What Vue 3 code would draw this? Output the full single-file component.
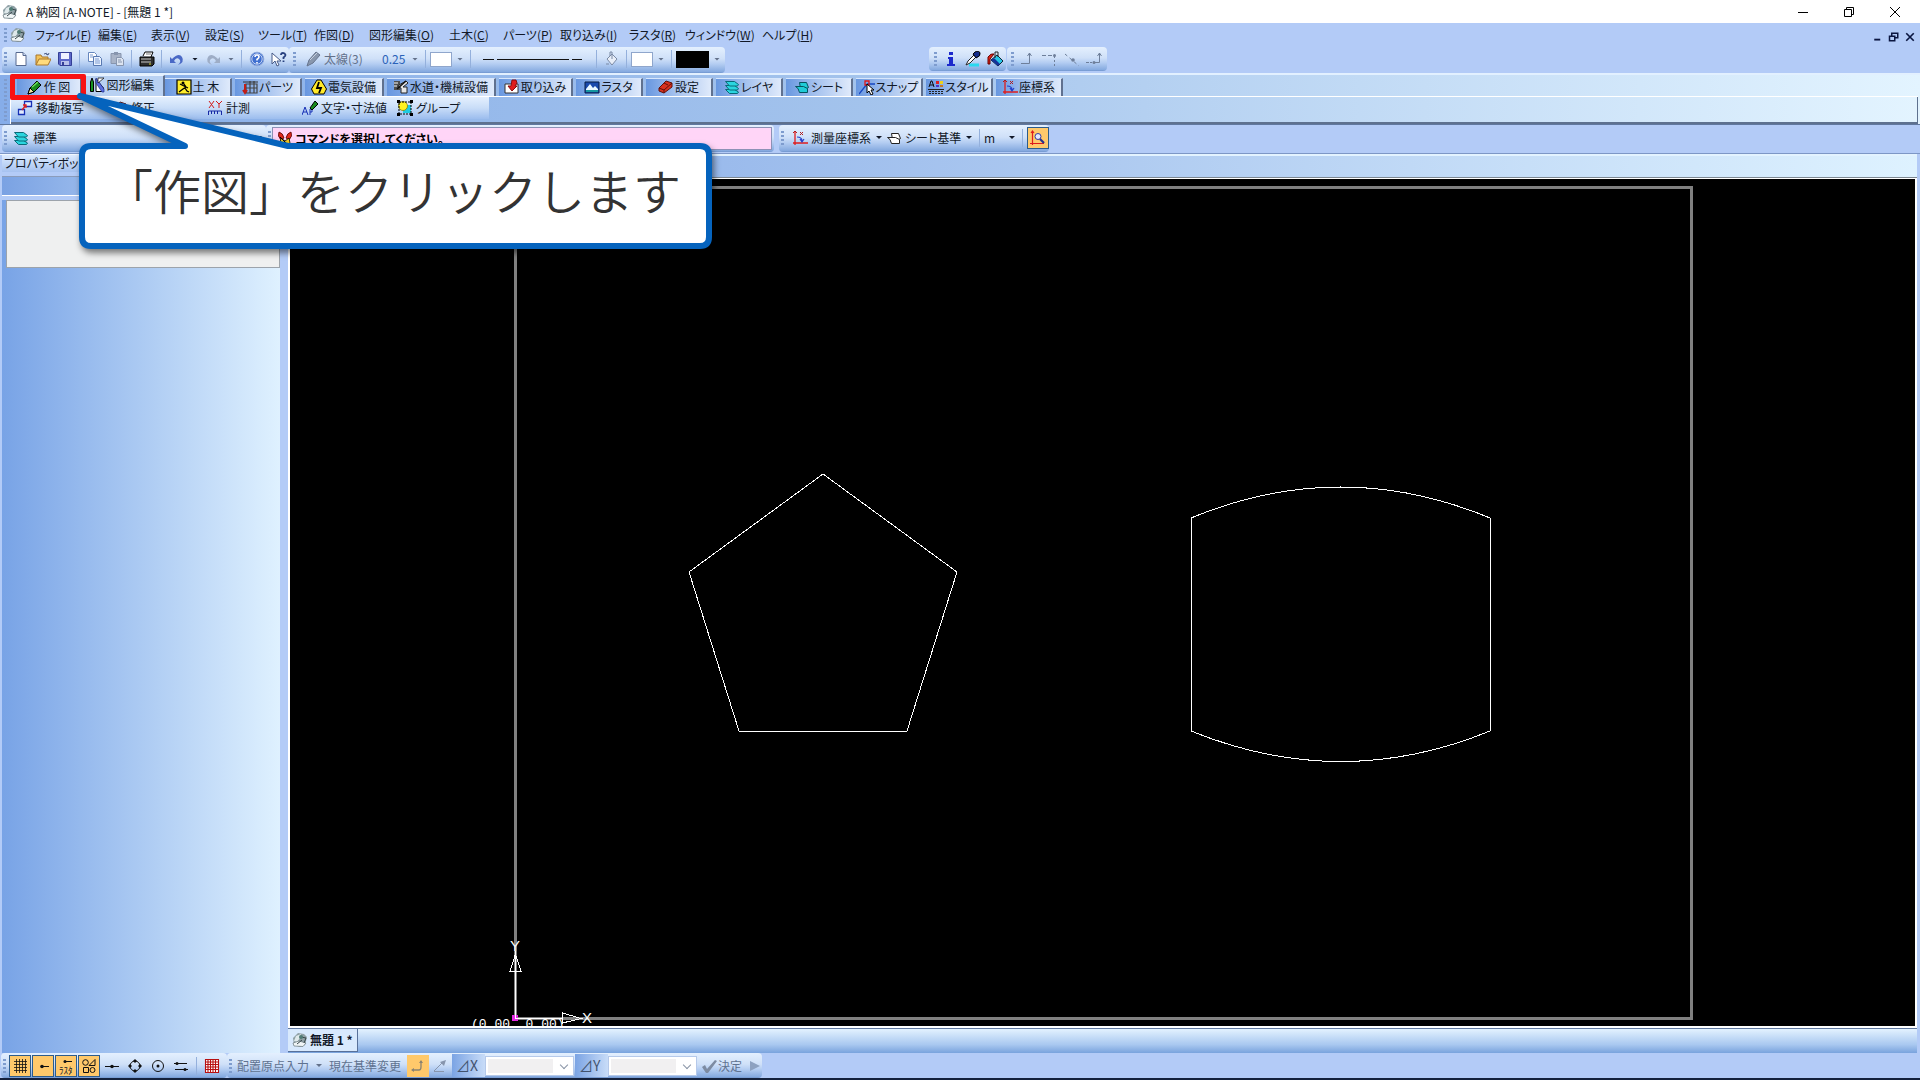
<script setup>
import { ref } from 'vue'

const icons = {
  app: '<path d="M1 6 6 1l6 1 3 3-2 8-5 2-6-2z" fill="#8fa0a5"/><path d="M2 9 4 4l5-2-1 4-3 4z" fill="#dfe9eb"/><path d="M1 11l6-2 7 2-3 3.500-9-.5z" fill="#f0f5f6" stroke="#66767b" stroke-width=".7"/><path d="M5 12l5-4M9 5l5 1-2 5" stroke="#39484c" fill="none"/><circle cx="9" cy="5" r="2" fill="#4f7a74"/>',
  file: '<path d="M3 1.500h7l3 3v10H3z" fill="#fff" stroke="#56698f"/><path d="M10 1.500v3h3" fill="#cfdcf5" stroke="#56698f"/>',
  open: '<path d="M1 14V4h5l1 2h6v3" fill="#f2c35a" stroke="#a8762a"/><path d="M1 14 4 8h12l-3 6z" fill="#ffdb7c" stroke="#a8762a"/><path d="M9 3q3-2 4 1m0 0 1-2m-1 2-2-1" stroke="#4b5c88" fill="none"/>',
  save: '<path d="M1.500 1.500h13v13H3l-1.500-1.500z" fill="#5c68c8" stroke="#343f96"/><path d="M4 2h8v6H4z" fill="#eef2ff"/><path d="M4 10h8v4H4z" fill="#b9c2ea"/><path d="M5 11h2v3H5z" fill="#343f96"/>',
  copy: '<path d="M1.500 1.500h6l2 2v7h-8z" fill="#fff" stroke="#6687bd"/><path d="M6.500 5.500h6l2 2v7h-8z" fill="#eaf2ff" stroke="#5879b1"/><path d="M8 8h4M8 10h5M8 12h5M3 4h3M3 6h3" stroke="#7c9bd0"/>',
  paste: '<path d="M2 2.500h10v10H2z" fill="#a8b3c7" stroke="#8795ae"/><path d="M5 1h4v3H5z" fill="#8795ae"/><path d="M7.500 6.500h5l2 2v6h-7z" fill="#dce4f0" stroke="#8795ae"/><path d="M9 9h3M9 11h4" stroke="#8795ae"/>',
  print: '<path d="M4 5 6 1h8l-2 5" fill="#fff" stroke="#000"/><path d="M1 6h14v7l-2 2H1z" fill="#2e2e2e" stroke="#000"/><path d="M2 8h10M2 11h10" stroke="#c9c9c9"/><path d="M10 13h2" stroke="#d5d52c"/><path d="M7 3h5" stroke="#777"/>',
  undo: '<path d="M3 8q7-7 10-2t-4 8q4-4 1-6t-5 2l2 2H1V6z" fill="#4a69c6"/>',
  redo: '<path d="M13 8Q6 1 3 6t4 8Q3 10 6 8t5 2l-2 2h6V6z" fill="#9eadc6"/>',
  help: '<circle cx="8" cy="8" r="6.800" fill="#3f6fd0" stroke="#8ba7da"/><circle cx="8" cy="8" r="5.200" fill="none" stroke="#fff" stroke-width=".7"/><path d="M6 6q0-2 2-2t2 2q0 1-2 2.500v1M8 11v1.500" stroke="#fff" stroke-width="1.600" fill="none"/>',
  what: '<path d="M1 2v11l3-3 2 5 2-1-2-4h4z" fill="#fff" stroke="#465a88"/><path d="M10 4q0-2 2-2t2.500 2q0 1-2 2.500V8m0 1.500V11" stroke="#27407f" stroke-width="1.800" fill="none"/>',
  grayPen: '<path d="M1 15 3 9 10 1l4 3-7 8z" fill="#8997ad" stroke="#67758e"/><path d="m4 9 7-7" stroke="#c9d2e0"/>',
  pen: '<path d="M1 15 3 9 10 2l4 4-7 7z" fill="#178a1b" stroke="#000"/><path d="M1 15 3 9l4 4z" fill="#f4e8a0" stroke="#000"/><path d="m5 8 6-5" stroke="#6ee05d" stroke-width="1.500"/>',
  bucket: '<path d="m3 8 5-5 5 5-5 6z" fill="#e8eef8" stroke="#7a8aa5"/><path d="M8 8V1h-2v4M2 13h3" stroke="#7a8aa5" fill="none"/>',
  tools: '<path d="M1.500 5 3 1l1.500 4v9.500h-3z" fill="#179420" stroke="#000"/><path d="M7 2v12.500h7.500V11z" fill="#fff" stroke="#000"/><path d="m7 1 8 11v3h-2L7 6z" fill="#5d6fe0" stroke="#1c2c8c" stroke-width=".7"/><path d="M15 1 9 6V1z" fill="#fff" stroke="#000" stroke-width=".7"/>',
  civil: '<path d="M1 1h14v14H1z" fill="#ffed2c" stroke="#000" stroke-width="1.200"/><circle cx="7" cy="4" r="1.500"/><path d="m8 5 2 3-3 2-4 3M9 9l2 3 2 1M4 5l8 4" stroke="#000" stroke-width="1.300" fill="none"/>',
  parts: '<path d="M4 5h11v9H4zM8 2v12M12 2v12M4 9h11" fill="none" stroke="#444" stroke-width="1.200"/><path d="M1 3h15" stroke="#333"/><path d="M3 5v9m-2-3 2 3 2-3" stroke="#c21d16" stroke-width="2" fill="none"/>',
  elec: '<path d="M6 1h4l5.500 9-2.500 5H3L.5 10z" fill="#ffe92a" stroke="#000"/><path d="M8 3 6 9h4l-2 5" stroke="#000" stroke-width="1.800" fill="none"/>',
  water: '<path d="M1 2h6v9H1z" fill="#4d4d4d"/><path d="m6 6 7-4 2 2-5 4h4v6H8V9L5 8z" fill="#e6e6e6" stroke="#222"/><path d="m4 10 9-8" stroke="#111" stroke-width="1.500"/><path d="M1 4h4M1 7h3" stroke="#fff"/>',
  take: '<path d="M1 5h13v9H1z" fill="#fff" stroke="#333"/><path d="M8 1h4l1 3-2 3h2l-5 5-4-5h3z" fill="#e01d1d" stroke="#8a0d0d"/>',
  raster: '<path d="M1 3h14v11H1z" fill="#1a4aac" stroke="#071d45"/><path d="m2 10 4-5 3 4 2-2 3 3v1H2z" fill="#e9f8ff"/><path d="M2 11h12v2H2z" fill="#1697a2"/>',
  config: '<path d="M1 9 8 2l6 2v4l-8 6-5-2z" fill="#d7301f" stroke="#601008"/><path d="m1 9 5 2 8-7M6 11v3M6 4l4 2" stroke="#601008" fill="none"/>',
  layer: '<path d="M1.500 10.500h9l4 2.500-1 1.500h-8z" fill="#2bd5df" stroke="#086a78"/><path d="M1.500 6.500h9l4 3-1 1.500h-8z" fill="#2bd5df" stroke="#086a78"/><path d="M1.500 2.500h9l4 3-1 1.500h-8z" fill="#2bd5df" stroke="#086a78"/>',
  sheet: '<path d="M5.500 3.500h7l2 5-2 1h-6z" fill="#20ccd7" stroke="#06535f"/><path d="M1.500 7.500h8l4 2v4h-8q-1-5-4-6z" fill="#20ccd7" stroke="#06535f"/>',
  sheetWhite: '<path d="M5.500 3.500h7l2 5-2 1h-6z" fill="#fff" stroke="#222"/><path d="M1.500 7.500h8l4 2v4h-8q-1-5-4-6z" fill="#fff" stroke="#222"/>',
  snap: '<path d="m0 15 8-10M8 5h8" stroke="#1747c2" stroke-width="1.300"/><path d="M6 2h4v4H6z" fill="none" stroke="#e01818" stroke-width="1.300"/><path d="M8 5v9l2-2 2 4 2-1-2-4h3z" fill="#fff" stroke="#000"/>',
  style: '<path d="m1 8 2-6h1l2 6M2 6h4" stroke="#111" fill="none"/><path d="M8 2h3v3H8z" fill="#e02121"/><path d="M12 2h3v3h-3z" fill="#edd31b"/><path d="M8 6h3v2H8z" fill="#4936c9"/><path d="M12 6h3v2h-3z" fill="#c97820"/><path d="M0 10.500h16" stroke="#222"/><path d="M1 12.500h14M1 14.500h14" stroke="#222" stroke-dasharray="2 1"/>',
  coord: '<path d="M3 1v14M1 13h15" stroke="#e01c1c" stroke-width="1.300"/><path d="m1 3 2-2 2 2M8 2l3 3m0-3L8 5" stroke="#b01c1c" fill="none"/><path d="M5 7q5 0 5 4m-2-2 2 3 2-3" stroke="#2440ca" stroke-width="1.200" fill="none"/>',
  coordZoom: '<path d="M2.500 1v14M0 13.500h14M1 3l1.500-2L4 3" stroke="#e01c1c" stroke-width="1.200" fill="none"/><circle cx="8" cy="6.500" r="3" fill="#e5e8ff" stroke="#333c9e"/><path d="m10 9 4 4" stroke="#26338f" stroke-width="2.200"/>',
  move: '<path d="M7.500 1.500h7v5h-7zM1.500 9.500h6v5h-6z" fill="#e4edff" stroke="#1730b5" stroke-width="1.300"/><path d="m5 10 4-5m-3 0h3v3" stroke="#e01d1d" stroke-width="1.300" fill="none"/>',
  measure: '<path d="m2 1 5 7m0-7L2 8M9 1l3 3 3-3m-3 3v4" stroke="#d11c1c" fill="none"/><path d="M1.500 15v-4h13v4M4.500 11v3M7.500 11v3M10.500 11v3" stroke="#1629a5" fill="none"/>',
  textPen: '<path d="m0 15 3-8 3 8M1 12h4M8 15V9h2v3H8" stroke="#1730b5" fill="none"/><path d="M8 8 13 1l3 3-6 6z" fill="#188a1c" stroke="#000"/>',
  group: '<path d="M6 5h8v8H6z" fill="#20cbe2"/><circle cx="6" cy="6" r="4.500" fill="#fff21f" stroke="#7a7300" stroke-width=".7"/><path d="M0 0h3v3H0zM13 0h3v3h-3zM0 13h3v3H0zM13 13h3v3h-3z" fill="#000"/><path d="M2 3v10m1 1h10m1-1V3m-1-1H3" stroke="#000" stroke-dasharray="2 1" fill="none"/>',
  command: '<path d="M2 1q4 1 5 6L4 9Q0 5 2 1zM14 1q-4 1-5 6l3 2q4-4 2-8z" fill="#e22a1c" stroke="#500" stroke-width=".8"/><path d="m4 7 4 3 4-3 1 5-3 3H6l-3-3z" fill="#f3ca22" stroke="#000" stroke-width=".8"/><path d="m3 6 8 8" stroke="#000"/>',
  info: '<path d="M6 1h4v3H6zM5 6h5v7h2v2H4v-2h2V8H5z" fill="#1c29cc"/>',
  dropper: '<path d="M4 14h10" stroke="#29d9f0" stroke-width="3"/><path d="m1 14 2-4 6-6 2 2-6 6z" fill="#fff" stroke="#222"/><path d="m8 3 2-2q4-2 5 1t-4 5z" fill="#142c8a" stroke="#000"/>',
  fill: '<path d="M1 13V6q3-4 6-3L3 8v5z" fill="#e22617" stroke="#600"/><path d="m4 9 6-5 6 6-5 5z" fill="#25c6e7" stroke="#123"/><path d="m4 9 3-2 6 6-2 2z" fill="#153399"/><path d="M8 7V1h3v5" stroke="#222" fill="none"/>',
  snapA: '<path d="M1 12.500h8.500V2m-2 3 2-3 2 3" stroke="#6e7f9a" fill="none"/>',
  snapB: '<path d="M0 4.500h11" stroke="#6e7f9a" stroke-dasharray="4 2"/><path d="M12.500 5v10" stroke="#6e7f9a" stroke-dasharray="2 2"/><circle cx="12.500" cy="4.500" r="1.500" fill="#6e7f9a"/>',
  snapC: '<path d="m1 3 14 12" stroke="#6e7f9a" stroke-dasharray="3 3"/><circle cx="9" cy="9" r="1.800" fill="#6e7f9a"/>',
  snapD: '<path d="M0 11.500h6" stroke="#6e7f9a" stroke-dasharray="3 1"/><circle cx="8" cy="11.500" r="1.500" fill="#6e7f9a"/><path d="M9 11.500h4.500V2m-2 3 2-3 2 3" stroke="#6e7f9a" fill="none"/>',
  grid: '<path d="M2 3.500h13M2 6.500h13M2 9.500h13M2 12.500h13M4.500 1v14M7.500 1v14M10.500 1v14M13.500 1v14" stroke="#111" stroke-width=".8"/>',
  gridRed: '<path d="M1 1h14v14H1z" fill="#fff"/><path d="M1 1.500h14M1 4h14M1 6.500h14M1 9h14M1 11.500h14M1 14.500h14M1.500 1v14M4 1v14M6.500 1v14M9 1v14M11.500 1v14M14.500 1v14" stroke="#b81010" stroke-width="1.100"/>',
  dotLine: '<path d="M6 8.500h8" stroke="#111"/><circle cx="7" cy="8.500" r="1.800" fill="#111"/>',
  dotSmall: '<path d="M6 3.500h8" stroke="#111"/><circle cx="7" cy="3.500" r="1.500" fill="#111"/>',
  shapes: '<circle cx="4.500" cy="4.500" r="2.800" fill="none" stroke="#111"/><path d="M2.500 9.500h5v5h-5zM8 7.500l6-6v6z" fill="none" stroke="#111"/><circle cx="11.500" cy="12" r="2.500" fill="none" stroke="#111"/>',
  midLine: '<path d="M1 8.500h14" stroke="#111"/><circle cx="8" cy="8.500" r="1.800" fill="#111"/>',
  circle4: '<circle cx="8" cy="8" r="5" fill="none" stroke="#111"/><path d="M8 1l2 2-2 2-2-2zM8 11l2 2-2 2-2-2zM1 8l2-2 2 2-2 2zM11 8l2-2 2 2-2 2z" fill="#111"/>',
  target: '<circle cx="8" cy="8" r="5.500" fill="none" stroke="#111"/><circle cx="8" cy="8" r="1.500" fill="#111"/>',
  parallel: '<path d="M1 5.500h13M2 11.500h13" stroke="#111"/><circle cx="4" cy="5.500" r="1.500" fill="#111"/><circle cx="12" cy="11.500" r="1.500" fill="#111"/>',
  relA: '<path d="M2 12h7q2 0 2-3V3" stroke="#8b8370" stroke-width="1.300" fill="none"/><path d="M9 5l2-3 2 3zM4 10v4l-3-2z" fill="#8b8370"/>',
  relB: '<path d="m2 13 9-9M2 13.500h10" stroke="#8795ad" fill="none"/><path d="m8 4 6-2-2 6z" fill="#8795ad"/>',
  check: '<path d="m1 9 3-2 2 4 8-9 2 1-9 12H5z" fill="#7d8ba2"/>',
  play: '<path d="m3 3 10 5-10 5z" fill="#8da1c0"/>',
  min: '<path d="M3 8.500h10" stroke="currentColor"/>',
  restore: '<path d="M3.500 5.500h7v7h-7zM5.500 5.500v-2h7v7h-2" fill="none" stroke="currentColor"/>',
  close: '<path d="m3 3 10 10M13 3 3 13" stroke="currentColor"/>',
  docMin: '<path d="M3 11.500h8" stroke="currentColor" stroke-width="2.500"/>',
  docRestore: '<path d="M2 7h7v6H2zM5 6V3h8v6H9" fill="none" stroke="currentColor" stroke-width="2"/>',
  docClose: '<path d="m3 3 10 10M13 3 3 13" stroke="currentColor" stroke-width="2.200"/>'
}

const menus = [
  ['ファイル', 'F', 63], ['編集', 'E', 53], ['表示', 'V', 54], ['設定', 'S', 53],
  ['ツール', 'T', 56], ['作図', 'D', 55], ['図形編集', 'O', 80], ['土木', 'C', 54],
  ['パーツ', 'P', 57], ['取り込み', 'I', 69], ['ラスタ', 'R', 56], ['ウィンドウ', 'W', 77], ['ヘルプ', 'H', 60]
]

const tabs = [
  ['作 図', 'pen', 68], ['図形編集', 'tools', 80], ['土 木', 'civil', 70], ['パーツ', 'parts', 70],
  ['電気設備', 'elec', 82], ['水道・機械設備', 'water', 112], ['取り込み', 'take', 77], ['ラスタ', 'raster', 70],
  ['設定', 'config', 70], ['レイヤ', 'layer', 70], ['シート', 'sheet', 70], ['スナップ', 'snap', 70],
  ['スタイル', 'style', 70], ['座標系', 'coord', 70]
]
const activeTab = ref('図形編集')

const commands = [
  ['移動複写', 'move'], ['修正', 'config'], ['計測', 'measure'], ['文字・寸法値', 'textPen'], ['グループ', 'group']
]

const snapToggles = [['グリッド', 'grid'], ['端点', 'dotLine'], ['ラスタ', 'dotSmall'], ['図形', 'shapes']]
const snapModes = [['中点', 'midLine'], ['四半円点', 'circle4'], ['中心', 'target'], ['平行', 'parallel']]
</script>

<template>
  <div class="app">
    <header class="title">
      <svg class="ico" viewBox="0 0 16 16" v-html="icons.app" />
      <h1>A 納図 [A-NOTE] - [無題 1 *]</h1>
      <div class="winbtns">
        <button v-for="n in ['min', 'restore', 'close']" :key="n" :aria-label="n">
          <svg class="ico" viewBox="0 0 16 16" v-html="icons[n]" />
        </button>
      </div>
    </header>

    <nav class="menu">
      <i class="grip" />
      <svg class="ico" viewBox="0 0 16 16" v-html="icons.app" />
      <div class="menuitems">
        <button v-for="m in menus" :key="m[1]" :style="{ width: m[2] + 'px' }">{{ m[0] }}(<u>{{ m[1] }}</u>)</button>
      </div>
      <div class="docbtns">
        <button v-for="n in ['docMin', 'docRestore', 'docClose']" :key="n" :aria-label="n">
          <svg viewBox="0 0 16 16" v-html="icons[n]" />
        </button>
      </div>
    </nav>

    <div class="row">
      <div class="bar main">
        <i class="grip" />
        <button v-for="n in ['file', 'open', 'save']" :key="n" class="cell" :aria-label="n"><svg class="ico" viewBox="0 0 16 16" v-html="icons[n]" /></button>
        <i class="sep" />
        <button v-for="n in ['copy', 'paste']" :key="n" class="cell" :aria-label="n"><svg class="ico" viewBox="0 0 16 16" v-html="icons[n]" /></button>
        <i class="sep" />
        <button class="cell" aria-label="印刷"><svg class="ico" viewBox="0 0 16 16" v-html="icons.print" /></button>
        <i class="sep" />
        <button class="cell" aria-label="元に戻す"><svg class="ico" viewBox="0 0 16 16" v-html="icons.undo" /></button>
        <i class="dd" />
        <button class="cell" aria-label="やり直し"><svg class="ico" viewBox="0 0 16 16" v-html="icons.redo" /></button>
        <i class="dd off" />
        <i class="sep" />
        <button class="cell" aria-label="ヘルプ"><svg class="ico" viewBox="0 0 16 16" v-html="icons.help" /></button>
        <button class="cell" aria-label="状況ヘルプ"><svg class="ico" viewBox="0 0 16 16" v-html="icons.what" /></button>
      </div>
      <div class="bar pens">
        <i class="grip" />
        <button class="penname"><svg class="ico" viewBox="0 0 16 16" v-html="icons.grayPen" />太線(3)</button>
        <select class="pick width" aria-label="線幅"><option>0.25</option></select>
        <i class="dd off" />
        <i class="sep" />
        <button class="swatch" aria-label="線色" />
        <i class="dd off" />
        <i class="sep" />
        <button class="linetype" aria-label="線種"><svg viewBox="0 0 100 16"><path d="M0 8.500h11M14 8.500h72M89 8.500h10" stroke="#111" /></svg></button>
        <i class="sep" />
        <button class="cell" aria-label="塗りつぶし"><svg class="ico" viewBox="0 0 16 16" v-html="icons.bucket" /></button>
        <i class="sep" />
        <button class="swatch" aria-label="塗り色" />
        <i class="dd off" />
        <i class="sep" />
        <button class="swatch black" aria-label="背景色" />
        <i class="dd off" />
      </div>
      <div class="bar info">
        <i class="grip" />
        <button v-for="n in ['info', 'dropper', 'fill']" :key="n" class="cell" :aria-label="n"><svg class="ico" viewBox="0 0 16 16" v-html="icons[n]" /></button>
      </div>
      <div class="bar snaps">
        <i class="grip" />
        <button v-for="n in ['snapA', 'snapB', 'snapC', 'snapD']" :key="n" class="cell" :aria-label="n"><svg class="ico" viewBox="0 0 16 16" v-html="icons[n]" /></button>
      </div>
    </div>

    <section class="ribbon">
      <i class="grip tall" />
      <div class="ribbonbody">
        <div class="tabs">
          <div v-for="t in tabs" :key="t[0]" class="slot" :style="{ width: t[2] + 'px' }">
            <button class="tab" :class="{ active: activeTab === t[0] }" @click="activeTab = t[0]">
              <svg class="ico" viewBox="0 0 16 16" v-html="icons[t[1]]" />{{ t[0] }}
            </button>
          </div>
        </div>
        <div class="sub">
          <div class="cmds">
            <button v-for="c in commands" :key="c[0]"><svg class="ico" viewBox="0 0 16 16" v-html="icons[c[1]]" />{{ c[0] }}</button>
          </div>
        </div>
      </div>
      <div class="highlight" />
    </section>

    <div class="row second">
      <div class="bar layerbar">
        <i class="grip" />
        <button class="std"><svg class="ico" viewBox="0 0 16 16" v-html="icons.layer" />標準</button>
        <i class="dd" />
      </div>
      <div class="bar prompt">
        <i class="grip" />
        <p><svg class="ico" viewBox="0 0 16 16" v-html="icons.command" />コマンドを選択してください。</p>
      </div>
      <div class="bar coords">
        <i class="grip" />
        <svg class="ico" viewBox="0 0 16 16" v-html="icons.coord" />
        <select class="pick system" aria-label="座標系"><option>測量座標系</option></select>
        <i class="dd" />
        <svg class="ico" viewBox="0 0 16 16" v-html="icons.sheetWhite" />
        <select class="pick base" aria-label="基準"><option>シート基準</option></select>
        <i class="dd" />
        <i class="sep" />
        <select class="pick unit" aria-label="単位"><option>m</option></select>
        <i class="dd" />
        <i class="sep" />
        <button class="cell on" aria-label="座標ズーム"><svg class="ico" viewBox="0 0 16 16" v-html="icons.coordZoom" /></button>
      </div>
    </div>

    <main class="work">
      <aside class="props">
        <h2>プロパティボックス</h2>
        <div class="strip" />
        <div class="panel"><div class="blank" /></div>
      </aside>
      <div class="doc">
        <div class="dochead" />
        <div class="canvas">
          <svg>
            <g transform="translate(-290 -179)">
              <rect x="515.500" y="187.500" width="1176" height="831" fill="none" stroke="#808080" stroke-width="3" />
              <g fill="none" stroke="#fff" shape-rendering="crispEdges">
                <path d="M823 474 957 572 907 731H739L689 572z" />
                <path d="M1191 518Q1341 456 1490 518V731Q1341 792 1191 731z" />
                <circle cx="515" cy="1018" r="3" fill="#e32be3" stroke="#e32be3" />
                <path d="M515.500 951V1018.500H562M510 971.500H521L515.500 954zM562.500 1013V1023L581 1018.500z" />
              </g>
              <g class="axis">
                <text x="510" y="951">Y</text>
                <text x="582" y="1023">X</text>
              </g>
              <text class="origin" x="471" y="1028" xml:space="preserve">(0.00, 0.00)</text>
            </g>
          </svg>
        </div>
        <div class="sheets">
          <button><svg class="ico" viewBox="0 0 16 16" v-html="icons.app" />無題 1 *</button>
        </div>
      </div>
    </main>

    <footer class="status">
      <div class="bar toggles">
        <i class="grip" />
        <button v-for="s in snapToggles" :key="s[0]" class="cell on" :aria-label="s[0]">
          <svg class="ico" viewBox="0 0 16 16" v-html="icons[s[1]]" />
          <small v-if="s[1] === 'dotSmall'">ﾗｽﾀ</small>
        </button>
        <button v-for="s in snapModes" :key="s[0]" class="cell" :aria-label="s[0]"><svg class="ico" viewBox="0 0 16 16" v-html="icons[s[1]]" /></button>
        <i class="sep" />
        <button class="cell" aria-label="赤グリッド"><svg class="ico" viewBox="0 0 16 16" v-html="icons.gridRed" /></button>
      </div>
      <div class="bar entry">
        <i class="grip" />
        <button class="dim">配置原点入力</button>
        <i class="dd off" />
        <button class="dim">現在基準変更</button>
        <button class="cell on flat" aria-label="相対"><svg class="ico" viewBox="0 0 16 16" v-html="icons.relA" /></button>
        <button class="cell" aria-label="極"><svg class="ico" viewBox="0 0 16 16" v-html="icons.relB" /></button>
        <label for="dx">⊿X</label>
        <div class="combo"><select id="dx" /></div>
        <label for="dy">⊿Y</label>
        <div class="combo"><select id="dy" /></div>
        <button class="dim ok"><svg class="ico" viewBox="0 0 16 16" v-html="icons.check" />決定</button>
        <svg class="ico" viewBox="0 0 16 16" v-html="icons.play" />
      </div>
    </footer>

    <div class="callout">
      <svg viewBox="0 0 660 170">
        <path d="M21 54H115L10 4 218 54H630Q639 54 639 63V145Q639 154 630 154H21Q12 154 12 145V63Q12 54 21 54z" fill="#fff" stroke="#0563bd" stroke-width="6" stroke-linejoin="round" />
      </svg>
      <p>「作図」をクリックします</p>
    </div>
  </div>
</template>

<style>
body {
  margin: 0;
  background: #14213c;
}
</style>

<style scoped>
.app {
  position: relative;
  display: flex;
  flex-direction: column;
  box-sizing: border-box;
  min-height: 100vh;
  overflow: hidden;
  background: #b3cbf7;
  border-bottom: 2px solid #14213c;
  color: #111827;
  font: 12px/16px "Noto Sans CJK JP", sans-serif;
  font-feature-settings: "palt";
  white-space: nowrap;
}
button,
select {
  box-sizing: border-box;
  margin: 0;
  padding: 0;
  border: 0;
  background: none;
  color: inherit;
  font: inherit;
  font-feature-settings: inherit;
  white-space: nowrap;
}
h1,
h2,
p {
  margin: 0;
  font-size: 12px;
  font-weight: 400;
}
svg {
  display: block;
  flex: none;
}
.ico {
  width: 16px;
  height: 16px;
}
.title {
  display: flex;
  align-items: center;
  gap: 8px;
  height: 23px;
  padding-left: 2px;
  background: #fff;
}
.winbtns {
  display: flex;
  margin-left: auto;
  padding-right: 2px;
}
.winbtns button {
  display: flex;
  justify-content: center;
  width: 46px;
  color: #000;
}
.menu {
  display: flex;
  align-items: center;
  height: 24px;
  padding-left: 2px;
}
.menuitems {
  display: flex;
  margin-left: 9px;
}
.menuitems button {
  text-align: left;
}
.docbtns {
  display: flex;
  gap: 4px;
  margin: 4px 4px 0 auto;
  color: #0b1640;
}
.docbtns svg {
  width: 12px;
  height: 12px;
}
.grip {
  flex: none;
  width: 3px;
  height: 14px;
  margin: 0 3px 0 2px;
  background: repeating-linear-gradient(#7e9cce 0 2px, transparent 2px 4px);
}
.grip.tall {
  height: 42px;
}
.row {
  display: flex;
  height: 26px;
  padding-left: 2px;
}
.bar {
  display: flex;
  align-items: center;
  box-sizing: border-box;
  border-radius: 4px;
  background: linear-gradient(#e4f0fe, #cfe0f8 45%, #b4cdf2 65%, #84a9df 96%, #6d91c9);
}
.cell {
  display: flex;
  flex: none;
  align-items: center;
  justify-content: center;
  width: 22px;
  height: 22px;
}
.cell.on {
  border: 1px solid #2c5c8c;
  background: #ffc96b;
}
.cell.flat {
  border-color: #ffc96b;
}
.sep {
  flex: none;
  width: 1px;
  height: 18px;
  margin: 0 4px 0 3px;
  background: #94b0dc;
}
.dd {
  flex: none;
  width: 6px;
  height: 3px;
  margin: 0 4px;
  background: #111827;
  clip-path: polygon(0 0, 100% 0, 50% 100%);
}
.dd.off {
  background: #63718a;
}
.main,
.pens {
  height: 26px;
  padding-bottom: 2px;
}
.main {
  width: 287px;
}
.pens {
  width: 436px;
  padding-left: 2px;
}
.info {
  width: 77px;
  height: 24px;
  margin-left: 204px;
  padding-left: 3px;
}
.snaps {
  width: 100px;
  height: 24px;
  margin-left: 1px;
  padding-left: 2px;
}
.penname {
  display: flex;
  gap: 2px;
  width: 76px;
  margin-left: 7px;
  color: #63718a;
}
.pick {
  appearance: none;
}
.pick.width {
  width: 26px;
  color: #2a62b8;
}
.swatch {
  flex: none;
  width: 22px;
  height: 15px;
  margin-right: 1px;
  border: 1px solid #8fa6cc;
  background: #fff;
}
.swatch.black {
  width: 33px;
  height: 17px;
  border-color: #000;
  background: #000;
}
.linetype {
  margin: 0 10px 0 8px;
}
.linetype svg {
  width: 100px;
  height: 16px;
}
.ribbon {
  position: relative;
  display: flex;
  align-items: center;
  box-sizing: border-box;
  height: 52px;
  padding-left: 2px;
  border-top: 2px solid #e2f0ff;
  border-bottom: 1px solid #60789f;
  background: linear-gradient(90deg, #86ade9, #a3c3ec 45%, #e3f4ff);
}
.ribbonbody {
  display: flex;
  flex: 1;
  flex-direction: column;
  align-self: stretch;
  margin-right: 2px;
}
.tabs {
  display: flex;
  align-items: flex-end;
  height: 21px;
  padding-left: 7px;
}
.slot {
  flex: none;
}
.tab {
  display: flex;
  align-items: center;
  justify-content: center;
  gap: 1px;
  width: calc(100% - 3px);
  height: 18px;
  padding-bottom: 1px;
  overflow: hidden;
  border-top: 1px solid #d8e7fc;
  border-right: 2px solid #60718f;
  background: linear-gradient(90deg, #6897e0, #a4c1ee 45%, #dfeafb);
}
.tab.active {
  width: 100%;
  height: 21px;
  padding-right: 4px;
  padding-bottom: 3px;
  border-color: #e8f2ff #60718f transparent;
  background: #b9d1f2;
}
.sub {
  box-sizing: border-box;
  height: 28px;
  border: solid #fff;
  border-width: 1px 0 0 1px;
  box-shadow: inset -1px -2px #5e718f;
}
.cmds {
  display: flex;
  align-items: center;
  width: 478px;
  height: 22px;
  padding-left: 6px;
  box-sizing: border-box;
  background: linear-gradient(#e4f0fe, #c9ddf8 50%, #9cbdee);
}
.cmds button {
  display: flex;
  flex: none;
  align-items: center;
  gap: 3px;
  width: 95px;
}
.highlight {
  position: absolute;
  top: -1px;
  left: 10px;
  box-sizing: border-box;
  width: 76px;
  height: 26px;
  border: 5px solid #f81212;
  border-radius: 2px;
}
.second {
  height: 27px;
  padding-bottom: 1px;
}
.second .bar {
  padding-bottom: 2px;
}
.layerbar {
  width: 264px;
}
.std {
  display: flex;
  gap: 4px;
  margin: 0 auto 0 3px;
}
.prompt {
  width: 508px;
}
.prompt .grip {
  margin-right: 0;
}
.prompt p {
  display: flex;
  flex: 1;
  align-items: center;
  align-self: stretch;
  gap: 2px;
  margin: 2px 2px 0 1px;
  padding-left: 4px;
  border: 1px solid #8d91b5;
  background: #ffd5f7;
  color: #000;
  font-weight: 700;
}
.coords {
  width: 270px;
  margin-left: 5px;
}
.coords .grip {
  margin-right: 8px;
}
.pick.system {
  width: 66px;
  padding-left: 3px;
}
.pick.base {
  width: 58px;
  margin-left: 2px;
  padding-left: 1px;
}
.pick.unit {
  width: 22px;
}
.work {
  display: flex;
  flex: 1;
  min-height: 300px;
  border-top: 1px solid #7d97c6;
}
.props {
  display: flex;
  flex: none;
  flex-direction: column;
  width: 280px;
  padding-left: 2px;
  box-sizing: border-box;
  border-top: 1px solid #f1f8ff;
}
.props h2 {
  height: 17px;
  padding-left: 2px;
  background: linear-gradient(#dcebff, #a6c2f0);
}
.strip {
  height: 18px;
  margin-top: 4px;
  border: solid #8b9cbb;
  border-width: 1px 0 0;
  border-bottom: 1px solid #fff;
  background: linear-gradient(90deg, #7aa2e3, #dceeff);
}
.panel {
  flex: 1;
  margin-top: 4px;
  padding-left: 4px;
  background: linear-gradient(90deg, #78a3e6, #dff1ff);
}
.blank {
  height: 66px;
  border: 1px solid #9ca3ab;
  background: #eff0f0;
}
.doc {
  display: flex;
  flex: 1;
  flex-direction: column;
  min-width: 0;
  margin-left: 8px;
  margin-right: 3px;
}
.dochead {
  height: 21px;
  border-top: 2px solid #e3f3ff;
  border-bottom: 1px solid #7d8790;
  background: linear-gradient(90deg, #86abe8, #a9c6ef 45%, #def2ff);
}
.canvas {
  position: relative;
  flex: 1;
  border: solid #fff;
  border-width: 1px 2px 2px;
  background: #000;
}
.canvas > svg {
  position: absolute;
  inset: 0;
  width: 100%;
  height: 100%;
}
.axis {
  fill: #fff;
  font: 15px "Liberation Sans", sans-serif;
}
.origin {
  fill: #fff;
  font: 13px "Liberation Mono", monospace;
}
.sheets {
  box-sizing: border-box;
  height: 25px;
  border-top: 1px solid #60789f;
  background: linear-gradient(#e3f2ff, #a9c8f0 65%, #79a3dd);
}
.sheets button {
  display: flex;
  align-items: center;
  gap: 2px;
  width: 70px;
  height: 23px;
  padding-left: 4px;
  border-right: 1px solid #58719a;
  border-bottom: 1px solid #58719a;
  background: #d8e9fd;
  font-weight: 700;
}
.status {
  display: flex;
  height: 25px;
  padding-left: 1px;
}
.toggles {
  width: 226px;
}
.toggles .cell {
  position: relative;
  margin-right: 1px;
}
.toggles small {
  position: absolute;
  bottom: 0;
  left: 3px;
  font-size: 9px;
  line-height: 10px;
}
.entry {
  width: 535px;
}
.entry .grip {
  margin-right: 5px;
}
.entry .dd {
  margin: 0 7px;
}
.dim {
  color: #5f7290;
}
.entry .flat {
  margin-left: 6px;
}
.entry label {
  box-sizing: border-box;
  flex: none;
  width: 33px;
  height: 23px;
  margin-left: 1px;
  padding-left: 4px;
  background: linear-gradient(90deg, #7ba4e4, #c8dcf8);
  color: #42536e;
  font-size: 14px;
  line-height: 22px;
}
.combo {
  position: relative;
  flex: none;
  box-sizing: border-box;
  width: 89px;
  height: 20px;
  padding: 2px 20px 2px 2px;
  border: 1px solid #b5c9ea;
  background: #fff;
}
.combo select {
  display: block;
  width: 100%;
  height: 14px;
  appearance: none;
  background: #f1f0f1;
}
.combo::after {
  content: "";
  position: absolute;
  top: 5px;
  right: 6px;
  width: 5px;
  height: 5px;
  border: solid #8994a6;
  border-width: 0 1px 1px 0;
  transform: rotate(45deg);
}
.ok {
  display: flex;
  gap: 1px;
  margin: 0 5px 0 4px;
}
.callout {
  position: absolute;
  top: 92px;
  left: 70px;
  width: 660px;
  height: 170px;
  pointer-events: none;
}
.callout svg {
  width: 660px;
  height: 170px;
  filter: drop-shadow(2px 4px 3px rgba(0, 0, 0, 0.5));
}
.callout p {
  position: absolute;
  top: 65px;
  left: 35px;
  color: #333;
  font-size: 48px;
  font-weight: 350;
  line-height: 64px;
  font-feature-settings: normal;
}
</style>
